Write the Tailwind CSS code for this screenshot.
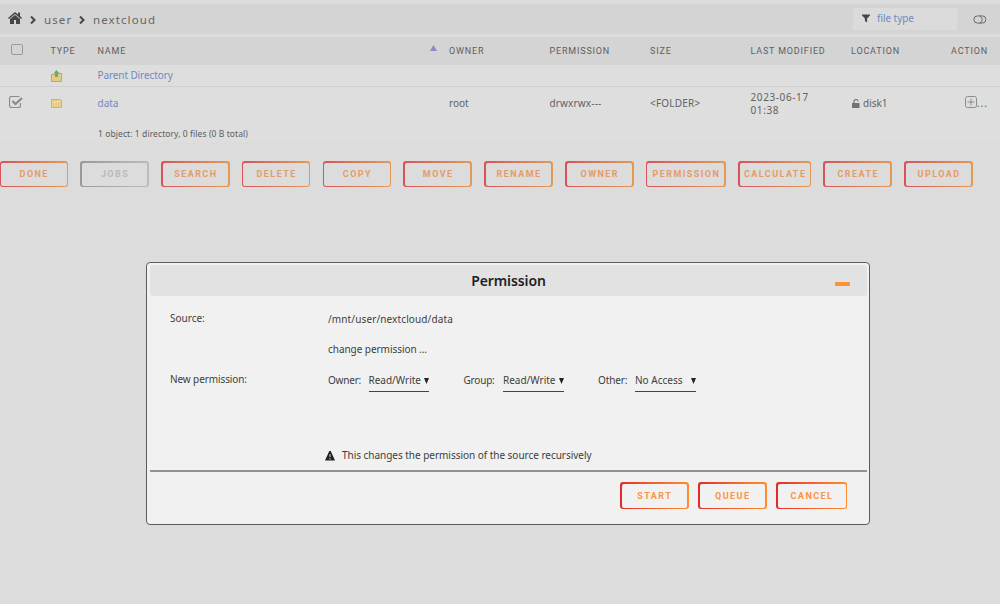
<!DOCTYPE html>
<html lang="en"><head><meta charset="utf-8"><title>File manager</title>
<script src="https://cdn.jsdelivr.net/npm/@tailwindcss/browser@4"></script></head>
<body class="relative h-[604px] w-[1000px] overflow-hidden bg-[#dcdcdc] pt-1 font-['Noto_Sans','Open_Sans',sans-serif] text-[10px] leading-[13px] text-[#626262]">
<header class="flex h-[30px] items-center bg-[#d4d4d4] pl-2 text-[11.500px] tracking-[1.100px] text-[#666]">
  <svg class="mb-[3px] h-3 w-[14px] fill-[#464646]" viewBox="0 0 28 24"><path d="M14 0 0 12l2 2L14 4l12 10 2-2-4-4V1h-4v4zM14 6 4 14v10h8v-8h4v8h8V14z"/></svg>
  <svg class="mt-[2px] ml-2 h-2 w-[6px] fill-none stroke-[#464646] stroke-2" viewBox="0 0 6 8"><path d="m1 .5 3.500 3.500L1 7.500"/></svg>
  <span class="ml-2 w-[29px] pt-px">user</span>
  <svg class="mt-[2px] ml-[6px] h-2 w-[6px] fill-none stroke-[#464646] stroke-2" viewBox="0 0 6 8"><path d="m1 .5 3.500 3.500L1 7.500"/></svg>
  <span class="ml-2 pt-px">nextcloud</span>
  <div class="mb-px ml-auto flex h-[22px] w-[104px] items-center bg-[#dbdbdb] pl-[9px] text-[10px] tracking-[-.05px] text-[#728abd]">
    <svg class="mr-[7px] h-[9px] w-[8px] fill-[#464646]" viewBox="0 0 9 9"><path d="M0 0h9v1L5.700 4.500V9L3.300 7.300V4.500L0 1z"/></svg>file type
  </div>
  <svg class="mr-[13px] ml-4 h-[9px] w-[14px] fill-none stroke-[#6a6a6a]" viewBox="0 0 14 9"><rect x=".9" y=".9" width="12" height="7.200" rx="3.600"/><path d="M6.500 1a3.600 3.600 0 0 1 0 7"/></svg>
</header>
<section class="mt-[3px]">
  <div class="grid h-[28px] grid-cols-[50.500px_47px_351.500px_100.500px_100.500px_100.500px_100.500px_1fr] items-center bg-[#d4d4d4] font-[Roboto,sans-serif] text-[9px] tracking-[.82px] text-[#5e5e5e]">
    <span class="mb-[3px] ml-[11px] h-[11px] w-[12px] rounded-[2px] border border-[#9a9a9a]"></span>
    <span>TYPE</span>
    <span class="flex">NAME<svg class="mr-3 ml-auto h-[6px] w-[7px] fill-[#8989cf]" viewBox="0 0 7 6"><path d="M3.500 0 7 6H0z"/></svg></span>
    <span>OWNER</span><span>PERMISSION</span><span>SIZE</span><span>LAST MODIFIED</span>
    <span class="flex"><span>LOCATION</span><span class="mr-[12px] ml-auto">ACTION</span></span>
  </div>
  <div class="grid h-[22px] grid-cols-[50px_47.500px_1fr] items-center border-b border-[#d0d0d0] bg-[#dedede]">
    <span></span>
    <svg class="ml-px h-3 w-[11px]" viewBox="0 0 11 12"><path d="M.5 4.500h4l1-1h5v8H.5z" fill="#e5cc80" stroke="#c8a657"/><path d="M5.500 0 8.500 3.500H7V7H4V3.500H2.500z" fill="#67ae6d"/></svg>
    <span class="tracking-[-.1px] text-[#728abd]">Parent Directory</span>
  </div>
  <div class="grid h-[34px] grid-cols-[50px_47.500px_351.500px_100.500px_100.500px_100.500px_100.500px_1fr] items-center bg-[#dedede] pb-px">
    <svg class="mb-[3px] ml-[9px] h-3 w-[14px] fill-none stroke-[#8b8b8b]" viewBox="0 0 14 12"><path d="M11.500 7v2.500a2 2 0 0 1-2 2h-7a2 2 0 0 1-2-2v-7a2 2 0 0 1 2-2h8" stroke-width="1.200"/><path d="m3.500 5 3 3L13 2" stroke-width="2.300"/></svg>
    <svg class="ml-px h-[9px] w-[11px]" viewBox="0 0 11 9"><path d="M.5.5h9l1 1v7H.5z" fill="#e6cf89" stroke="#d2b266"/><path d="M2 3.500h3l1-1h3" stroke="#f0e2b7" fill="none"/></svg>
    <span class="text-[#728abd]">data</span><span>root</span><span class="tracking-[.15px]">drwxrwx---</span><span class="tracking-[.2px]">&lt;FOLDER&gt;</span>
    <span class="pt-px leading-[13.500px] tracking-[.6px]">2023-06-17<br>01:38</span>
    <span class="flex items-center">
      <svg class="mr-[3px] ml-px h-[9px] w-[8px]" viewBox="0 0 8 9"><path d="M2 4V2.500a2 2 0 0 1 4 0" fill="none" stroke="#737373" stroke-width="1.200"/><path d="M0 4h7.500v5H0z" fill="#737373"/></svg>disk1
      <svg class="mb-[3px] ml-auto h-3 w-3 fill-none stroke-[#8b8b8b]" viewBox="0 0 12 12"><rect x=".5" y=".5" width="11" height="11" rx="2"/><path d="M6 2.500v7M2.500 6h7"/></svg><span class="mr-[12px] tracking-[1.100px]">...</span>
    </span>
  </div>
  <div class="flex h-[21px] items-center bg-[#dedede] pt-[3px] pl-[98px] text-[8.500px] tracking-[.08px] text-[#5c5c5c]">1 object: 1 directory, 0 files (0 B total)</div>
</section>
<nav class="mt-[19px] -ml-[.5px] flex h-[26px] gap-[12.300px] font-[Roboto,sans-serif] text-[9px] font-bold tracking-[1.450px] text-[#e59b68] *:flex *:shrink-0 *:rounded-[3px] *:bg-linear-to-r *:from-[#d55359] *:to-[#e39a55] *:p-[1.500px] [&_span]:flex [&_span]:flex-1 [&_span]:items-center [&_span]:justify-center [&_span]:rounded-[2px] [&_span]:bg-[#dcdcdc] [&_span]:pt-px [&_span]:pl-px">
  <button class="w-[68.500px]"><span>DONE</span></button>
  <button class="w-[68.500px] from-[#999]! to-[#bcbcbc]! text-[#b9b9b9]"><span>JOBS</span></button>
  <button class="w-[68.500px]"><span>SEARCH</span></button>
  <button class="w-[68.500px]"><span>DELETE</span></button>
  <button class="w-[68.500px]"><span>COPY</span></button>
  <button class="w-[68.500px]"><span>MOVE</span></button>
  <button class="w-[68.500px]"><span>RENAME</span></button>
  <button class="w-[68.500px]"><span>OWNER</span></button>
  <button class="w-[80px]"><span>PERMISSION</span></button>
  <button class="w-[73px]"><span>CALCULATE</span></button>
  <button class="w-[68.500px]"><span>CREATE</span></button>
  <button class="w-[68.500px]"><span>UPLOAD</span></button>
</nav>
<section role="dialog" class="absolute top-[262px] left-[146px] flex h-[263px] w-[724px] flex-col rounded-[4px] border border-[#5c5c5c] bg-[#f1f1f1] pt-[2px] pr-[2px] pb-[3px] pl-[3px] text-[#3d3d3d]">
  <div class="relative flex h-[31px] shrink-0 items-center justify-center rounded-[3px] bg-[#e2e2e2] pb-px text-[14px] font-semibold tracking-[-.1px] text-[#222]"><h2>Permission</h2><i class="absolute top-[17px] right-[17px] h-[4px] w-[15px] rounded-[1px] bg-[#ff9136]"></i></div>
  <div class="grid h-[174px] shrink-0 grid-cols-[158px_1fr] grid-rows-[31px_31px_31px_1fr] pt-[7px] pl-[20px]">
    <span class="pt-[9px]">Source:</span><span class="pt-[10px] tracking-[.12px]">/mnt/user/nextcloud/data</span>
    <span></span><span class="pt-[9px] tracking-[-.05px]">change permission ...</span>
    <span class="pt-[8px] tracking-[-.1px]">New permission:</span>
    <div class="flex pt-[9px]">
      <span class="w-[40.500px] tracking-[-.2px]">Owner:</span><span class="flex h-[18px] w-[60.500px] border-b border-[#444]">Read/Write<svg class="mt-[4px] ml-auto h-[6px] w-[5px] fill-[#222]" viewBox="0 0 5 6"><path d="M0 0h5L2.500 6z"/></svg></span>
      <span class="ml-[34.500px] w-[39.500px] tracking-[-.2px]">Group:</span><span class="flex h-[18px] w-[60.500px] border-b border-[#444]">Read/Write<svg class="mt-[4px] ml-auto h-[6px] w-[5px] fill-[#222]" viewBox="0 0 5 6"><path d="M0 0h5L2.500 6z"/></svg></span>
      <span class="ml-[34.500px] w-[37px] tracking-[-.1px]">Other:</span><span class="flex h-[18px] w-[60.500px] border-b border-[#444]">No Access<svg class="mt-[4px] ml-auto h-[6px] w-[5px] fill-[#222]" viewBox="0 0 5 6"><path d="M0 0h5L2.500 6z"/></svg></span>
    </div>
    <span></span>
    <p class="-ml-[3px] flex items-center self-end pb-[8px] tracking-[-.03px]"><svg class="mr-[7px] h-[10px] w-[10px]" viewBox="0 0 10 10"><path d="M4.300 0h1.400L10 9.500H0z" fill="#222"/><path d="M5 3.200v3M5 7.200v1.300" stroke="#ddd"/></svg>This changes the permission of the source recursively</p>
  </div>
  <div class="flex flex-1 justify-end gap-[9.500px] border-t-2 border-[#929292] pt-[10px] pr-[20px] font-[Roboto,sans-serif] text-[9px] font-bold tracking-[1.450px] text-[#ff9142] *:flex *:h-[27px] *:rounded-[3px] *:bg-linear-to-r *:from-[#e22828] *:to-[#ff8c2f] *:p-[1.500px] [&_span]:flex [&_span]:flex-1 [&_span]:items-center [&_span]:justify-center [&_span]:rounded-[2px] [&_span]:bg-[#f1f1f1] [&_span]:pt-px [&_span]:pl-px">
    <button class="w-[68.500px]"><span>START</span></button>
    <button class="w-[68.500px]"><span>QUEUE</span></button>
    <button class="w-[71px]"><span>CANCEL</span></button>
  </div>
</section>
</body></html>
